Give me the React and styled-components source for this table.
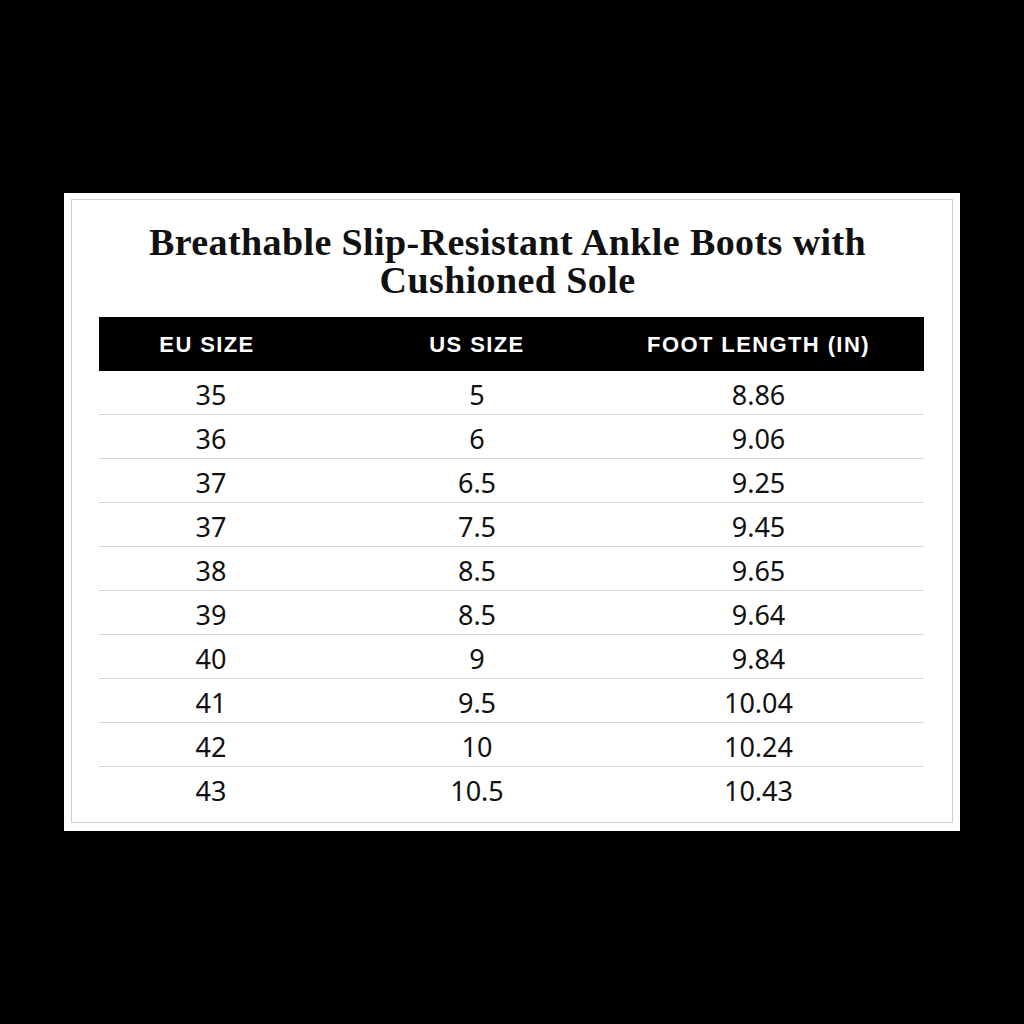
import React from "react";
import styled, { createGlobalStyle } from "styled-components";

const Global = createGlobalStyle`
  html, body { margin: 0; padding: 0; background: #000; }
  body { font-family: "Noto Sans", sans-serif; }
`;

const Page = styled.div`
  width: 1024px;
  height: 1024px;
  display: flex;
  align-items: center;
  justify-content: center;
  background: #000;
`;

const Card = styled.div`
  width: 896px;
  height: 638px;
  box-sizing: border-box;
  background: #fff;
  padding: 6px 7px 8px 7px;
  display: flex;
`;

const Inner = styled.div`
  flex: 1;
  border: 1px solid #cfcfcf;
  box-sizing: border-box;
  padding: 23px 28px 10px 27px;
  display: flex;
  flex-direction: column;
`;

const Title = styled.h1`
  margin: 0 0 18px 0;
  padding-right: 8px;
  font-family: "Liberation Serif", "Times New Roman", serif;
  font-weight: 700;
  font-size: 38px;
  line-height: 38px;
  letter-spacing: 0.4px;
  text-align: center;
  color: #111;
`;

const Table = styled.div`
  display: flex;
  flex-direction: column;
`;

const Row = styled.div`
  display: grid;
  grid-template-columns: 224px 308px 1fr;
  align-items: center;
  height: ${(p) => (p.$head ? "54px" : "43px")};
  background: ${(p) => (p.$head ? "#000" : "#fff")};
  border-bottom: ${(p) => (p.$last || p.$head ? "none" : "1px solid #d9d9d9")};
`;

const HeadCell = styled.div`
  font-family: "Liberation Sans", Arial, sans-serif;
  font-weight: 700;
  font-size: 22px;
  letter-spacing: 1.4px;
  color: #fff;
  text-align: center;
  padding-top: 1px;
  padding-right: ${(p) => (p.$pr ? p.$pr : 0)}px;
`;

const Cell = styled.div`
  font-family: "Noto Sans", sans-serif;
  font-size: 27px;
  color: #111;
  text-align: center;
  padding-top: 4px;
  padding-right: ${(p) => (p.$pr ? p.$pr : 0)}px;
`;

const rows = [
  ["35", "5", "8.86"],
  ["36", "6", "9.06"],
  ["37", "6.5", "9.25"],
  ["37", "7.5", "9.45"],
  ["38", "8.5", "9.65"],
  ["39", "8.5", "9.64"],
  ["40", "9", "9.84"],
  ["41", "9.5", "10.04"],
  ["42", "10", "10.24"],
  ["43", "10.5", "10.43"],
];

export default function App() {
  return (
    <>
      <Global />
      <Page>
        <Card>
          <Inner>
            <Title>
              Breathable Slip-Resistant Ankle Boots with
              <br />
              Cushioned Sole
            </Title>
            <Table>
              <Row $head>
                <HeadCell $pr={8}>EU SIZE</HeadCell>
                <HeadCell>US SIZE</HeadCell>
                <HeadCell $pr={38}>FOOT LENGTH (IN)</HeadCell>
              </Row>
              {rows.map((r, i) => (
                <Row key={i} $last={i === rows.length - 1}>
                  <Cell>{r[0]}</Cell>
                  <Cell>{r[1]}</Cell>
                  <Cell $pr={38}>{r[2]}</Cell>
                </Row>
              ))}
            </Table>
          </Inner>
        </Card>
      </Page>
    </>
  );
}
